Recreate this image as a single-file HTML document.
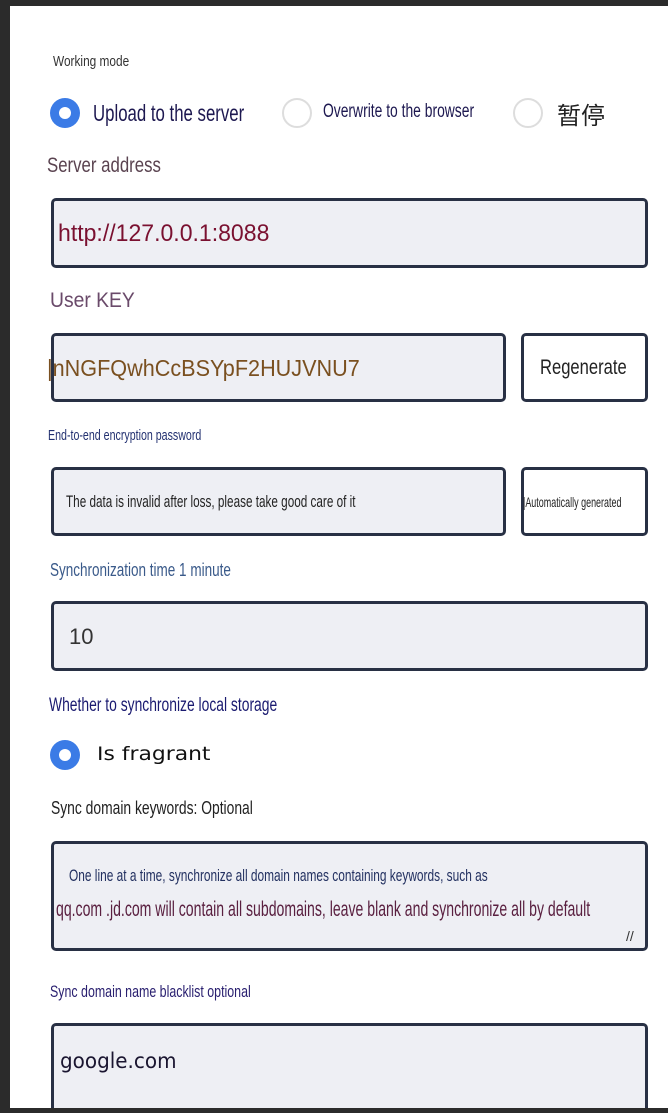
<!DOCTYPE html>
<html><head><meta charset="utf-8"><style>
html,body{margin:0;padding:0;}
body{width:668px;height:1113px;background:#2b2b2b;position:relative;overflow:hidden;font-family:"Liberation Sans",sans-serif;}
.page{position:absolute;left:10px;top:6px;width:658px;height:1102px;background:#fff;overflow:hidden;}
.a{position:absolute;white-space:nowrap;transform-origin:0 0;}
.box{position:absolute;box-sizing:border-box;border:3px solid #283044;border-radius:5px;background:#eeeff4;}
.btn{position:absolute;box-sizing:border-box;border:3px solid #283044;border-radius:5px;background:#fff;}
.radio{position:absolute;width:30px;height:30px;border-radius:50%;box-sizing:border-box;border:2px solid #ddd;background:#fff;}
.radio.on{background:#3b7be6;border:none;}
.radio.on::after{content:"";position:absolute;left:9px;top:9px;width:12px;height:12px;border-radius:50%;background:#fff;}
</style></head><body>
<div class="page"></div>
<div class="a" style="left:53px;top:53px;font-size:15px;color:#333;transform:scaleX(0.79)">Working mode</div>
<div class="radio on" style="left:50px;top:98px;"></div>
<div class="a" style="left:93px;top:100px;font-size:23px;color:#1d1850;transform:scaleX(0.73)">Upload to the server</div>
<div class="radio" style="left:282px;top:98px;"></div>
<div class="a" style="left:323px;top:101px;font-size:19px;color:#1d1850;transform:scaleX(0.73)">Overwrite to the browser</div>
<div class="radio" style="left:513px;top:98px;"></div>
<div class="a" style="left:557px;top:96px;font-size:24px;color:#222;font-family:'Noto Sans CJK SC',sans-serif;">暂停</div>
<div class="a" style="left:47px;top:154px;font-size:21px;color:#5a4350;transform:scaleX(0.8)">Server address</div>
<div class="box" style="left:51px;top:198px;width:597px;height:70px;"></div>
<div class="a" style="left:58px;top:220px;font-size:24px;color:#7a1030;transform:scaleX(0.96)">http://127.0.0.1:8088</div>
<div class="a" style="left:50px;top:289px;font-size:21px;color:#6a4a6a;transform:scaleX(0.92)">User KEY</div>
<div class="box" style="left:51px;top:333px;width:455px;height:69px;"></div>
<div class="a" style="left:47px;top:355px;font-size:23px;color:#7a5020;transform:scaleX(0.94)">|nNGFQwhCcBSYpF2HUJVNU7</div>
<div class="btn" style="left:521px;top:333px;width:127px;height:69px;"></div>
<div class="a" style="left:540px;top:356px;font-size:21px;color:#222;transform:scaleX(0.79)">Regenerate</div>
<div class="a" style="left:48px;top:427px;font-size:15px;color:#223070;transform:scaleX(0.71)">End-to-end encryption password</div>
<div class="box" style="left:51px;top:467px;width:455px;height:69px;"></div>
<div class="a" style="left:66px;top:492px;font-size:17px;color:#222;transform:scaleX(0.69)">The data is invalid after loss, please take good care of it</div>
<div class="btn" style="left:521px;top:467px;width:127px;height:69px;"></div>
<div class="a" style="left:523px;top:494px;font-size:14px;color:#222;transform:scaleX(0.64)">|Automatically generated</div>
<div class="a" style="left:50px;top:560px;font-size:18px;color:#3a5a8a;transform:scaleX(0.75)">Synchronization time 1 minute</div>
<div class="box" style="left:51px;top:601px;width:597px;height:70px;"></div>
<div class="a" style="left:69px;top:624px;font-size:22px;color:#333;">10</div>
<div class="a" style="left:49px;top:695px;font-size:19px;color:#1a1a70;transform:scaleX(0.73)">Whether to synchronize local storage</div>
<div class="radio on" style="left:50px;top:740px;"></div>
<div class="a" style="left:97px;top:743px;font-size:19px;color:#111;font-family:'DejaVu Sans',sans-serif;transform:scaleX(1.15)">Is fragrant</div>
<div class="a" style="left:51px;top:798px;font-size:18px;color:#222;transform:scaleX(0.77)">Sync domain keywords: Optional</div>
<div class="box" style="left:51px;top:841px;width:597px;height:110px;"></div>
<div class="a" style="left:69px;top:866px;font-size:17px;color:#223060;transform:scaleX(0.70)">One line at a time, synchronize all domain names containing keywords, such as</div>
<div class="a" style="left:56px;top:898px;font-size:21px;color:#5a2040;transform:scaleX(0.67)">qq.com .jd.com will contain all subdomains, leave blank and synchronize all by default</div>
<div class="a" style="left:626px;top:928px;font-size:14px;color:#333;">//</div>
<div class="a" style="left:50px;top:982px;font-size:17px;color:#2a2070;transform:scaleX(0.73)">Sync domain name blacklist optional</div>
<div class="box" style="left:51px;top:1023px;width:597px;height:85px;border-bottom:none;border-radius:5px 5px 0 0;"></div>
<div class="a" style="left:60px;top:1049px;font-size:21px;color:#1a1530;font-family:'DejaVu Sans',sans-serif;transform:scaleX(0.95)">google.com</div>
<div style="position:absolute;left:0;top:1108px;width:668px;height:5px;background:#2b2b2b;"></div>
</body></html>
